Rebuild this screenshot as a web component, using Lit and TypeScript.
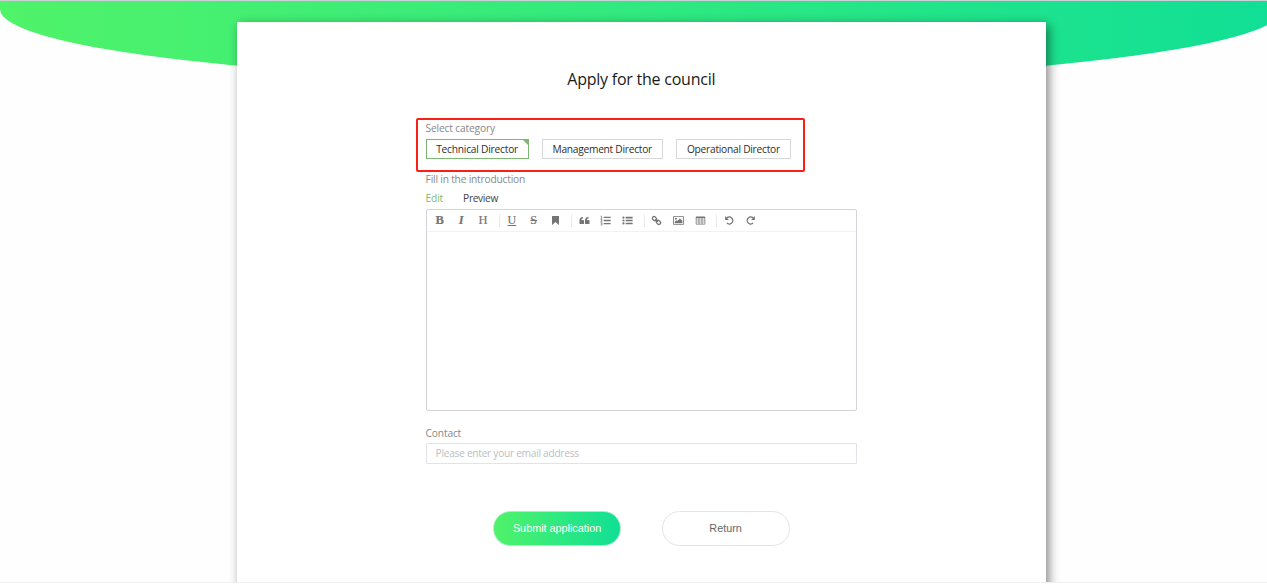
import { LitElement, html, css, svg } from "lit";
import { customElement, state } from "lit/decorators.js";

const icons: Record<string, unknown> = {
  bookmark: svg`<path d="M2.2 1.2h7.6v9.6L6 7.6l-3.8 3.2z"/>`,
  quote: svg`<g transform="rotate(180 6 6)"><path d="M1.7 2.1h2.6q1.2 0 1.2 1v2.5c0 2.8-1.2 4.2-3.9 4.2V8.2c1.2 0 1.8-.6 1.8-1.6H1.7q-1.2 0-1.2-1V3.1q0-1 1.2-1zM7.7 2.1h2.6q1.2 0 1.2 1v2.5c0 2.8-1.2 4.2-3.9 4.2V8.2c1.2 0 1.8-.6 1.8-1.6H7.7q-1.2 0-1.2-1V3.1q0-1 1.2-1z"/></g>`,
  ol: svg`<path d="M4 1.8h7.6v1.4H4zM4 5.3h7.6v1.4H4zM4 8.8h7.6v1.4H4z"/><path d="M.8 1.1h.8v2.3M.7 3.6h1.8M.7 4.9h1.5v.8L.8 6.9h1.7M.7 8.4h1.6L1.6 9.3h.7v1.6H.7" fill="none" stroke="currentColor" stroke-width=".8"/>`,
  ul: svg`<path d="M4 2h7.6v1.7H4zM4 5.2h7.6v1.7H4zM4 8.4h7.6v1.7H4z"/><circle cx="1.6" cy="2.8" r="1.2"/><circle cx="1.6" cy="6" r="1.2"/><circle cx="1.6" cy="9.2" r="1.2"/>`,
  link: svg`<g fill="none" stroke="currentColor" stroke-width="1.4"><rect x="1.3" y="2.1" width="4.8" height="3.6" rx="1.7" transform="rotate(45 3.7 3.9)"/><rect x="5.8" y="6.3" width="4.8" height="3.6" rx="1.7" transform="rotate(45 8.2 8.1)"/><path d="M4.6 4.8l2.7 2.5"/></g>`,
  image: svg`<path fill-rule="evenodd" d="M.2 1.4h11.6v9.2H.2zM1.1 2.3v7.4h9.8V2.3z"/><circle cx="3.1" cy="4.2" r="1.1"/><path d="M1.8 8.9V7.4l1.9-1.8 1 1L7.5 3.8l2.7 2.6v2.5z"/>`,
  table: svg`<path fill-rule="evenodd" d="M1.6 1.6h8.8q.8 0 .8.8v7.2q0 .8-.8.8H1.6q-.8 0-.8-.8V2.4q0-.8.8-.8zM1.6 3.5v1.6h2.3V3.5zM4.8 3.5v1.6h2.4V3.5zM8.1 3.5v1.6h2.3V3.5zM1.6 5.8v1.5h2.3V5.8zM4.8 5.8v1.5h2.4V5.8zM8.1 5.8v1.5h2.3V5.8zM1.6 8v1.6h2.3V8zM4.8 8v1.6h2.4V8zM8.1 8v1.6h2.3V8z"/>`,
  undo: svg`<path d="M3 3.4a3.8 3.8 0 1 1 .2 5.4" fill="none" stroke="currentColor" stroke-width="1.5"/><path d="M1.2 1.2v4.2h4.2z"/>`,
  redo: svg`<path d="M9 3.4a3.8 3.8 0 1 0-.2 5.4" fill="none" stroke="currentColor" stroke-width="1.5"/><path d="M10.8 1.2v4.2H6.6z"/>`,
};

@customElement("editor-toolbar")
export class EditorToolbar extends LitElement {
  static styles = css`
    :host { display: flex; align-items: center; box-sizing: border-box; height: 22px; padding: 0 0 1px 2.15px; border-bottom: 1px solid #f2f2f4; color: #757575; }
    .item { flex: none; width: 21.7px; height: 20px; display: flex; align-items: center; justify-content: center; font: 12.5px/20px "Liberation Serif", serif; -webkit-text-stroke: 0.2px #757575; }
    .sep { flex: none; width: 2.3px; height: 13px; margin-left: 5px; border-left: 1px solid #ebebed; box-sizing: border-box; }
    .b { font-weight: bold; }
    .i { font-style: italic; font-weight: bold; }
    .u { text-decoration: underline; font-size: 12px; }
    .s { text-decoration: line-through; font-size: 12px; }
    svg { width: 11px; height: 11px; fill: currentColor; display: block; }
  `;
  private icon(name: string) {
    return html`<span class="item"><svg viewBox="0 0 12 12">${icons[name]}</svg></span>`;
  }
  render() {
    const sep = html`<span class="sep"></span>`;
    return html`
      <span class="item b">B</span><span class="item i">I</span><span class="item">H</span>${sep}
      <span class="item u">U</span><span class="item s">S</span>${this.icon("bookmark")}${sep}
      ${["quote", "ol", "ul"].map((n) => this.icon(n))}${sep}
      ${["link", "image", "table"].map((n) => this.icon(n))}${sep}
      ${["undo", "redo"].map((n) => this.icon(n))}
    `;
  }
}

@customElement("app-root")
export class AppRoot extends LitElement {
  static styles = css`
    :host { display: block; height: 587px; background: #fff; font-family: "Open Sans", sans-serif; font-size: 10.2px; line-height: 16px; color: #333; }
    .page { position: relative; box-sizing: border-box; height: 583px; overflow: hidden; padding-top: 22px; border-bottom: 1px solid #f0f0f0; background: #fefefe; }
    .backdrop { position: absolute; top: 0; left: 0; width: 1283px; height: 82px; border-radius: 0 0 50% 50% / 0 0 73px 73px; background: linear-gradient(90deg, #50f369, #10df96); }
    .topline { position: absolute; top: 0; left: 0; width: 100%; height: 1px; background: #c9d0d6; }
    .card { position: relative; box-sizing: border-box; width: 809px; height: 620px; margin-left: 237px; padding: 45px 189px 0 188.6px; background: #fff; box-shadow: 3px 3px 10px rgba(0, 0, 0, 0.47); }
    h1 { margin: 0; font-size: 16px; line-height: 24px; font-weight: 400; letter-spacing: -0.24px; text-align: center; color: #1a1a1a; }
    .label { height: 16px; color: #888; white-space: nowrap; }
    .category { margin-top: 29px; letter-spacing: -0.15px; }
    .intro { margin-top: 12px; letter-spacing: -0.19px; }
    .contact { margin-top: 14px; letter-spacing: -0.16px; }
    .chips { display: flex; gap: 13px; margin-top: 3px; }
    .chip { position: relative; box-sizing: border-box; height: 20px; border: 1px solid #d6d8da; text-align: center; line-height: 19px; color: #2e2e2e; white-space: nowrap; }
    .technical { width: 103px; letter-spacing: -0.21px; }
    .management { width: 121.3px; letter-spacing: -0.26px; }
    .operational { width: 115px; letter-spacing: -0.245px; }
    .chip.active { border-color: #7db873; }
    .chip.active::after { content: ""; position: absolute; top: 0; right: 0; border-style: solid; border-width: 0 5px 5px 0; border-color: transparent #7db873 transparent transparent; }
    .highlight { position: absolute; top: 96px; left: 179px; box-sizing: border-box; width: 389px; height: 54px; border: 2px solid #fb1f16; border-radius: 2px; pointer-events: none; }
    .tabs { display: flex; gap: 20px; margin-top: 3px; height: 16px; }
    .tab { letter-spacing: -0.34px; color: #444; }
    .tab.active { letter-spacing: -0.15px; color: #7db873; }
    .editor { box-sizing: border-box; height: 202px; margin-top: 3px; border: 1px solid #d2d4d9; border-radius: 2px; }
    .input { box-sizing: border-box; height: 21px; margin-top: 2px; padding-left: 9px; border: 1px solid #e1e3e8; border-radius: 1px; line-height: 19px; letter-spacing: -0.285px; color: #bbbec5; }
    .actions { display: flex; justify-content: center; gap: 40.5px; margin-top: 47px; }
    .button { box-sizing: border-box; width: 128px; height: 35px; padding: 0 0 2px; border: 1px solid #e3e4e9; border-radius: 18px; background: #fff; color: #666; font: 10.8px/30px "Liberation Sans", sans-serif; }
    .primary { border-color: #a9ecc5; color: #fff; background: linear-gradient(90deg, #50f369, #10df96) border-box; }
  `;
  @state() private category = "technical";
  private chip(id: string, text: string) {
    return html`<div class="chip ${id} ${this.category === id ? "active" : ""}" @click=${() => (this.category = id)}>${text}</div>`;
  }
  render() {
    return html`
      <div class="page">
        <div class="backdrop"></div>
        <div class="topline"></div>
        <main class="card">
          <h1>Apply for the council</h1>
          <div class="label category">Select category</div>
          <div class="chips">
            ${this.chip("technical", "Technical Director")}
            ${this.chip("management", "Management Director")}
            ${this.chip("operational", "Operational Director")}
          </div>
          <div class="highlight"></div>
          <div class="label intro">Fill in the introduction</div>
          <div class="tabs"><span class="tab active">Edit</span><span class="tab">Preview</span></div>
          <div class="editor"><editor-toolbar></editor-toolbar></div>
          <div class="label contact">Contact</div>
          <div class="input">Please enter your email address</div>
          <div class="actions">
            <button class="button primary">Submit application</button>
            <button class="button">Return</button>
          </div>
        </main>
      </div>
    `;
  }
}
